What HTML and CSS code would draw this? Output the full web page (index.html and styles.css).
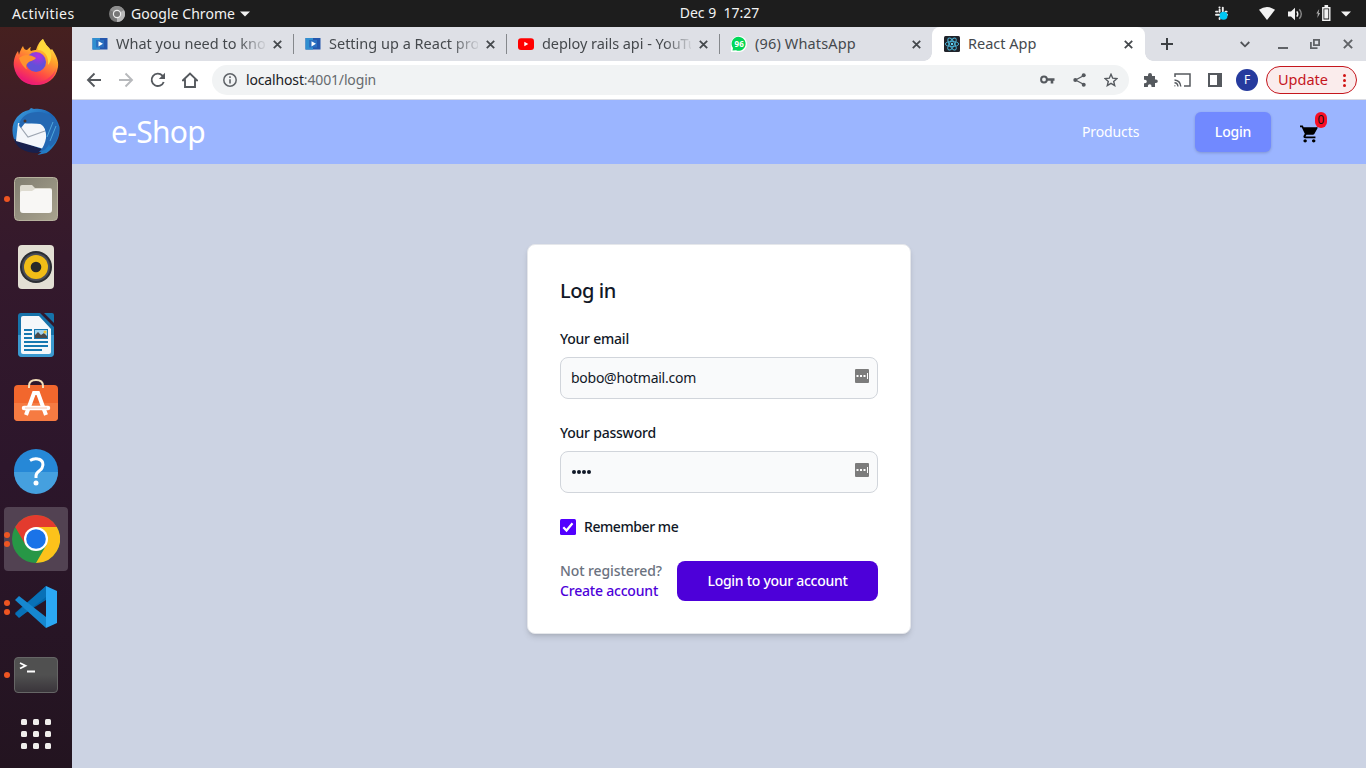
FILE: index.html
```html
<!DOCTYPE html>
<html lang="en">
<head>
<meta charset="utf-8">
<title>React App</title>
<link rel="stylesheet" href="styles.css">
</head>
<body>
<header class="topbar">
  <div class="top-left">
    <span class="activities">Activities</span>
    <svg class="app-ico" width="16" height="16" viewBox="0 0 16 16"><circle cx="8" cy="8" r="8" fill="#777"/><path d="M8 8 1 4A8 8 0 0 1 15 4Z" fill="#8d8d8d"/><path d="M8 8 15 4A8 8 0 0 1 8 16Z" fill="#b8b8b8"/><circle cx="8" cy="8" r="4.2" fill="#eee"/><circle cx="8" cy="8" r="3" fill="#777"/></svg>
    <span class="app-name">Google Chrome</span>
    <svg width="10" height="6" viewBox="0 0 10 6"><path d="M0 .5h10L5 5.5z" fill="#f2f2f2"/></svg>
  </div>
  <div class="clock">Dec 9&nbsp; 17:27</div>
  <div class="tray">
    <svg class="slack" width="15" height="15" viewBox="0 0 15 15"><g stroke="#eee" stroke-width="1.9" stroke-linecap="round"><path d="M5.6 3.800v2M2 5.600h1.500M5.400 1.500h.2M8.800 1.600v3.600M11.500 5.600h1.200M2 8.800h3.500M5.600 12v1M12.500 8.800h.5"/></g><circle cx="9.500" cy="9.700" r="4" fill="#00c8f5"/></svg>
    <svg class="wifi" width="16" height="13" viewBox="0 0 16 13"><path d="M0 2.8Q8-2.6 16 2.8L8 13z" fill="#f2f2f2"/></svg>
    <svg class="sound" width="15" height="14" viewBox="0 0 15 14"><path d="M0 4.5h3L7 .8v12.4L3 9.5H0z" fill="#f2f2f2"/><path d="M8.8 4.3q2 2.7 0 5.4" fill="none" stroke="#f2f2f2" stroke-width="1.4"/><path d="M11.3 2.3q4 4.7 0 9.4" fill="none" stroke="#888" stroke-width="1.4"/></svg>
    <svg class="battery" width="15" height="16" viewBox="0 0 15 16"><path d="M3.2 4 .3 8.5h1.6L1.3 13l2.9-5H2.6z" fill="#aaa"/><path d="M6.8 2.7h7v12.500h-7z" fill="none" stroke="#f2f2f2" stroke-width="1.4"/><path d="M8.5 0h3.6v2H8.5zM8.300 4.300h4v9.300h-4z" fill="#f2f2f2"/></svg>
    <svg width="10" height="6" viewBox="0 0 10 6"><path d="M0 .5h10L5 5.5z" fill="#f2f2f2"/></svg>
  </div>
</header>
<div class="desktop">
<nav class="dock">
  <div class="slot"><svg width="48" height="48" viewBox="0 1 48 48">
    <defs><linearGradient id="ff" x1=".8" y1="0" x2=".3" y2="1"><stop offset="0" stop-color="#fff44f"/><stop offset=".35" stop-color="#ffa52a"/><stop offset=".7" stop-color="#ff4a45"/><stop offset="1" stop-color="#e60d82"/></linearGradient><radialGradient id="fp" cx=".6" cy=".2"><stop offset="0" stop-color="#b52ee0"/><stop offset="1" stop-color="#6350d8"/></radialGradient></defs>
    <path d="M11 8c1 3 2 4 4 4 2-2 3-3 4-3-1 2-1 3 0 4 2-1 4-1 5-1 2-6 4-9 7-11 1 5 5 7 8 11l1-1c4 6 7 12 6 18C44 41 35 47 24 47S4 40 2 29c-1-6 1-12 4-16l1 4c1-4 2-6 4-9z" fill="url(#ff)"/>
    <circle cx="24" cy="24" r="10" fill="url(#fp)"/><path d="M7 20c5-4 11-4 17 0-2 3-7 3-8 5-3 2-2 5 0 7-4-2-7-6-9-12z" fill="#ff922e"/><path d="M26 12c7 0 11 7 10 15 5-6 4-14-1-19l-4-7c-3 4-5 7-5 11z" fill="#ffd83b"/><path d="M4 34c7 11 20 14 31 7 5-3 8-7 9-11-2 14-14 17-20 17C14 47 7 42 4 34z" fill="#ee236f" opacity=".6"/></svg></div>
  <div class="slot"><svg width="48" height="48" viewBox="0 0 48 48">
    <defs><linearGradient id="tb" x1="0" y1="0" x2="1" y2="1"><stop offset="0" stop-color="#3da0e2"/><stop offset=".5" stop-color="#1c65b5"/><stop offset="1" stop-color="#2689cf"/></linearGradient></defs>
    <path d="M.500 24C0 14 7 5 17 3l2-2 3 1c13-2 23 7 25.500 18 1 11-5 20-13 26l-9 2 4-3C14 46 1 40 .500 24z" fill="url(#tb)"/><path d="M2 32q11 4 28 10l-4 4C12 46 4 40 2 32z" fill="#18204d"/><path d="M6 16 32 17l4 20-4 5L4 34z" fill="#f4f6fa"/><path d="m7 18 9 12 17-6" fill="none" stroke="#9da5b1" stroke-width="1.200"/><path d="M7 18c2-9 9-13 19-13 11 0 20 8 21 19-1 8-4 13-9 16l-1-3c-2 4-4 6-9 8 6-9 9-19 3-26-5-5-11-2-18-3l-4 5z" fill="#2468b3"/><path d="m44 19-6 15m3-19-6 15" stroke="#50a8dd" fill="none"/><circle cx="13" cy="14" r="1.500" fill="#4a342a"/></svg></div>
  <div class="slot"><span class="run one"></span><svg width="48" height="48" viewBox="0 0 48 48"><defs><linearGradient id="fl" x2="1" y2="1"><stop stop-color="#807d70"/><stop offset="1" stop-color="#a9a38e"/></linearGradient></defs><rect x="2.500" y="2.500" width="43" height="43" rx="4" fill="url(#fl)" stroke="#b7b29e"/><path d="M8 12q0-2 2-2h10l3 3h15q2 0 2 2v10H8z" fill="#dedbd0"/><path d="M8 18q0-2 2-2h10l3-2h15q2 0 2 2v19q0 3-3 3H11q-3 0-3-3z" fill="#f8f7f5"/></svg></div>
  <div class="slot"><svg width="48" height="48" viewBox="0 0 48 48"><rect x="6" y="2" width="36" height="44" rx="4" fill="#e3dfd4"/><circle cx="24" cy="24" r="16" fill="#2b2d32"/><circle cx="24" cy="24" r="14" fill="#4b4e58"/><circle cx="24" cy="24" r="12" fill="#f1bd17"/><circle cx="24" cy="24" r="5.300" fill="#292929"/></svg></div>
  <div class="slot"><svg width="48" height="48" viewBox="0 0 48 48"><path d="M9 2h19l14 14v26q0 4-4 4H10q-4 0-4-4V5q0-3 3-3z" fill="#1673aa"/><path d="M6 24h36v18q0 4-4 4H10q-4 0-4-4z" fill="#3b99cf"/><path d="M32 2h8q2 0 2 2v8z" fill="#1673aa"/><path d="M9 7q0-2 2-2h16l12 13v23q0 2-2 2H11q-2 0-2-2z" fill="#f5f8fa"/><path d="M12 19h8m-8 4h8m-8 4h8m-8 4h24m-24 4h24m-24 4h18" stroke="#1678b0" stroke-width="2"/><path d="M22 18h14v10H22z" fill="#1678b0"/><path d="M23 19h12v8H23z" fill="#9ed3ef"/><path d="m23 27 0-3 3-3 3 3 3-2 3 3v2z" fill="#494949"/><circle cx="33" cy="21" r="1.500" fill="#f2c230"/></svg></div>
  <div class="slot"><svg width="48" height="48" viewBox="0 0 48 48"><rect x="2" y="6" width="44" height="36" rx="4" fill="#f2672d"/><path d="M2 24h44v14q0 4-4 4H6q-4 0-4-4z" fill="#f67b42"/><path d="M17 9V7q0-6 7-6t7 6v2" fill="none" stroke="#f4dfb9" stroke-width="2"/><g stroke="#fff" fill="none"><path d="m14 36 8-22h4l8 22" stroke-width="4"/><path d="M12 29h24" stroke-width="4.500" stroke-linecap="round"/></g><path d="M13 29h22" stroke="#f4c8b5"/></svg></div>
  <div class="slot"><svg width="48" height="48" viewBox="0 0 48 48"><circle cx="24" cy="24" r="22" fill="#2688d7"/><path d="M2 25h44a22 22 0 0 1-44 0z" fill="#45a0df"/><path d="M18 13.500q4-2.500 8-1.500c5 1 6 5 4 9-1 3-6 3-6 8v2" fill="none" stroke="#fff" stroke-width="3"/><circle cx="24" cy="36" r="2.500" fill="#fff"/></svg></div>
  <div class="slot active"><span class="run two"></span><svg width="48" height="48" viewBox="0 0 48 48"><circle cx="24" cy="24" r="24" fill="#279746"/><path d="M3.200 12A24 24 0 0 1 44.800 12H24L13.600 30z" fill="#e33b2e"/><path d="M24 12h20.800A24 24 0 0 1 24 48l10.400-18z" fill="#fcc21b"/><circle cx="24" cy="24" r="12" fill="#fff"/><circle cx="24" cy="24" r="9.800" fill="#1a73e8"/></svg></div>
  <div class="slot"><span class="run two"></span><svg width="48" height="48" viewBox="0 0 48 48"><path d="M3 30 34 3v14L7 34z" fill="#0065a9"/><path d="m3 31 4 4L34 14V3z" fill="#0871b7"/><path d="m3 17 4-4 27 21v11z" fill="#1688d0"/><path d="m34 3 11 5v32l-11 5z" fill="#2ba8f4"/></svg></div>
  <div class="slot"><span class="run one"></span><svg width="48" height="48" viewBox="0 0 48 48"><defs><linearGradient id="tm" x2="0" y2="1"><stop offset=".5" stop-color="#505050"/><stop offset="1" stop-color="#39343a"/></linearGradient></defs><rect x="2.500" y="6.500" width="43" height="35" rx="3.500" fill="url(#tm)" stroke="#666"/><path d="m8 12 5.500 2.700L8 17.500m7 3h8" fill="none" stroke="#fff" stroke-width="1.800"/></svg></div>
  <div class="apps"><i></i><i></i><i></i><i></i><i></i><i></i><i></i><i></i><i></i></div>
</nav>
<main class="browser">
  <div class="tabs">
    <div class="tab"><svg class="fav" width="16" height="16" viewBox="0 0 16 16"><path d="M.5 2h15v11.500H.5z" fill="#2457ad"/><path d="M.5 2H8v11.500H.5z" fill="#308fd0"/><path d="M4 4h8v7.500H4z" fill="#2a6fc0"/><path d="M6.500 5.200v5.200l4.500-2.600z" fill="#fff"/></svg><span class="tt fade">What you need to kno</span><svg class="x" width="9" height="9" viewBox="0 0 9 9"><path d="m.8.8 7.4 7.4m0-7.4L.8 8.200"/></svg></div>
    <div class="tab"><svg class="fav" width="16" height="16" viewBox="0 0 16 16"><path d="M.5 2h15v11.500H.5z" fill="#2457ad"/><path d="M.5 2H8v11.500H.5z" fill="#308fd0"/><path d="M4 4h8v7.500H4z" fill="#2a6fc0"/><path d="M6.500 5.200v5.200l4.500-2.600z" fill="#fff"/></svg><span class="tt fade">Setting up a React pro</span><svg class="x" width="9" height="9" viewBox="0 0 9 9"><path d="m.8.8 7.4 7.4m0-7.4L.8 8.200"/></svg></div>
    <div class="tab"><svg class="fav" width="16" height="16" viewBox="0 0 16 16"><rect y="2.300" width="16" height="11.600" rx="3" fill="#f00"/><path d="M6.300 5.700v4.600l4-2.300z" fill="#fff"/></svg><span class="tt fade t3">deploy rails api - YouTu</span><svg class="x" width="9" height="9" viewBox="0 0 9 9"><path d="m.8.8 7.4 7.4m0-7.4L.8 8.200"/></svg></div>
    <div class="tab last"><svg class="fav" width="16" height="16" viewBox="0 0 16 16"><path d="M0 16V8a8 8 0 1 1 8 8z" fill="#fff"/><path d="M1.500 14.500 2 12A7 7 0 1 1 5 14.300z" fill="#00d757"/><text x="8.200" y="11" text-anchor="middle" font-family="Noto Sans, sans-serif" font-weight="700" font-size="8" fill="#fff">96</text></svg><span class="tt t4">(96) WhatsApp</span><svg class="x" width="9" height="9" viewBox="0 0 9 9"><path d="m.8.8 7.4 7.4m0-7.4L.8 8.200"/></svg></div>
    <div class="tab current"><svg class="fav" width="16" height="16" viewBox="0 0 16 16"><rect width="16" height="16" rx="1.500" fill="#20232a"/><g fill="none" stroke="#4db5d8" stroke-width=".9"><ellipse cx="8" cy="8" rx="6.700" ry="2.600"/><ellipse cx="8" cy="8" rx="6.700" ry="2.600" transform="rotate(60 8 8)"/><ellipse cx="8" cy="8" rx="6.700" ry="2.600" transform="rotate(120 8 8)"/></g><circle cx="8" cy="8" r="1.200" fill="#61dafb"/></svg><span class="tt t5">React App</span><svg class="x" width="9" height="9" viewBox="0 0 9 9"><path d="m.8.8 7.4 7.4m0-7.4L.8 8.200"/></svg></div>
    <svg class="plus" width="12" height="12" viewBox="0 0 12 12"><path d="M6 0v12M0 6h12" stroke="#3c4043" stroke-width="2"/></svg>
    <div class="wincontrols">
      <svg width="10" height="7" viewBox="0 0 10 7"><path d="m.7 1 4.300 4.300L9.300 1" fill="none" stroke="#505357" stroke-width="1.800"/></svg>
      <svg width="10" height="10" viewBox="0 0 10 10"><path d="M0 9h10" stroke="#606367" stroke-width="2"/></svg>
      <svg width="10" height="10" viewBox="0 0 10 10"><path d="M3.900.9h5.200v5.200H3.900zM.9 3v6.100H7.500" fill="none" stroke="#606367" stroke-width="1.800"/></svg>
      <svg width="10" height="10" viewBox="0 0 10 10"><path d="m.9.9 8.200 8.200m0-8.200L.9 9.100" stroke="#606367" stroke-width="2"/></svg>
    </div>
  </div>
  <div class="toolbar">
    <div class="navicons">
      <svg width="16" height="16" viewBox="0 0 16 16"><path d="M15 8H2m6.500-6.500L2 8l6.500 6.500" fill="none" stroke="#55595e" stroke-width="1.900"/></svg>
      <svg width="16" height="16" viewBox="0 0 16 16"><path d="M1 8h13M7.500 1.500 14 8l-6.500 6.500" fill="none" stroke="#b7b9bc" stroke-width="1.900"/></svg>
      <svg width="16" height="16" viewBox="0 0 16 16"><path d="M13.700 10A6.200 6.200 0 1 1 12.400 3.600L14 5.200" fill="none" stroke="#55595e" stroke-width="1.900"/><path d="M15 .8v6.200H8.800z" fill="#55595e"/></svg>
      <svg width="16" height="16" viewBox="0 0 16 16"><path d="M1 8.300 8 1.500l7 6.800h-2V15H3V8.300z" fill="none" stroke="#55595e" stroke-width="1.900"/></svg>
    </div>
    <div class="omnibox">
      <svg width="14" height="14" viewBox="0 0 14 14"><circle cx="7" cy="7" r="6.200" fill="none" stroke="#5f6368" stroke-width="1.500"/><path d="M7 6.200v4.300M7 3.300v1.700" stroke="#5f6368" stroke-width="1.600"/></svg>
      <span class="url"><b>localhost</b>:4001/login</span>
      <svg class="key" width="15" height="10" viewBox="0 0 15 10"><circle cx="4" cy="4.500" r="2.900" fill="none" stroke="#55595e" stroke-width="2"/><path d="M7 4.500h7.500M12 4.500v4" stroke="#55595e" stroke-width="2.600"/></svg>
      <svg width="13" height="14" viewBox="0 0 13 14"><path d="m11 2.500-8.500 4.500 8.500 4.500" fill="none" stroke="#55595e" stroke-width="1.300"/><g fill="#55595e"><circle cx="10.700" cy="2.300" r="2"/><circle cx="2.300" cy="7" r="2"/><circle cx="10.700" cy="11.700" r="2"/></g></svg>
      <svg width="14" height="14" viewBox="0 0 14 14"><path d="m7 1.300 1.700 3.900 4.200.4-3.200 2.800 1 4.200L7 10.400l-3.700 2.200 1-4.200L1.100 5.600l4.200-.4z" fill="none" stroke="#55595e" stroke-width="1.400"/></svg>
    </div>
    <svg class="puzzle" width="15" height="15" viewBox="0 0 15 15"><path d="M5 3V2a2 2 0 0 1 4 0v1h3v3.500h1a1.800 1.800 0 0 1 0 3.600h-1V14H8.500v-1a1.800 1.800 0 0 0-3.600 0v1H1v-3.700h1a1.800 1.800 0 0 0 0-3.600H1V3z" fill="#55595e"/></svg>
    <svg class="cast" width="17" height="14" viewBox="0 0 17 14"><path d="M1 4V1h15v12h-6" fill="none" stroke="#55595e" stroke-width="1.500"/><path d="M.5 12.800h.8M.5 9.800q3 0 3.500 3.700M.5 7q5.800.5 6.300 6.500" fill="none" stroke="#55595e" stroke-width="1.400"/></svg>
    <svg class="panel" width="14" height="14" viewBox="0 0 14 14"><path d="M1 1h12v12H1z" fill="none" stroke="#55595e" stroke-width="2"/><path d="M9 1h4v12H9z" fill="#55595e"/></svg>
    <span class="avatar">F</span>
    <div class="update"><span>Update</span><svg width="3" height="13" viewBox="0 0 3 13"><g fill="#d01414"><circle cx="1.500" cy="1.500" r="1.500"/><circle cx="1.500" cy="6.500" r="1.500"/><circle cx="1.500" cy="11.500" r="1.500"/></g></svg></div>
  </div>
  <div class="shopbar">
    <a class="brand">e-Shop</a>
    <a class="products">Products</a>
    <a class="login">Login</a>
    <div class="cart"><svg width="18" height="18" viewBox="1 2 21 20"><path d="M7 18c-1.100 0-2 .9-2 2s.9 2 2 2 2-.9 2-2-.9-2-2-2zM1 2v2h2l3.600 7.600L5.200 14c-.7 1.300.3 3 1.800 3h12v-2H7.400l1.100-2h7.500c.7 0 1.400-.4 1.700-1l3.600-6.500A1 1 0 0 0 20 4H5.200l-.9-2zm16 16c-1.100 0-2 .9-2 2s.9 2 2 2 2-.9 2-2-.9-2-2-2z"/></svg><span class="badge">0</span></div>
  </div>
  <section class="page">
    <form class="card">
      <h1>Log in</h1>
      <div><label class="l1">Your email</label><div class="input"><span class="mail">bobo@hotmail.com</span><svg width="14" height="14" viewBox="0 0 14 14"><rect width="14" height="14" rx="1" fill="#7c7c7c"/><path d="M1.500 6h2v2h-2zM5 6h2v2H5zM8.500 6h2v2h-2zM12 4h1v6h-1z" fill="#fff"/></svg></div></div>
      <div><label class="l2">Your password</label><div class="input"><span class="dots"><i></i><i></i><i></i><i></i></span><svg width="14" height="14" viewBox="0 0 14 14"><rect width="14" height="14" rx="1" fill="#7c7c7c"/><path d="M1.500 6h2v2h-2zM5 6h2v2H5zM8.500 6h2v2h-2zM12 4h1v6h-1z" fill="#fff"/></svg></div></div>
      <div class="remember"><svg width="16" height="16" viewBox="0 0 16 16"><rect width="16" height="16" rx="1.500" fill="#5200ff"/><path d="m3.300 8.300 3.200 3.200 6-7.300" fill="none" stroke="#fff" stroke-width="2.200"/></svg><span>Remember me</span></div>
      <div class="actions"><div class="reg"><div class="not">Not registered?</div><a class="create">Create account</a></div><div class="submit"><span>Login to your account</span></div></div>
    </form>
  </section>
</main>
</div>
</body>
</html>
```
FILE: styles.css
```css
* { box-sizing: border-box; }
body { margin: 0; width: 1366px; height: 768px; overflow: hidden; font-family: "Noto Sans", "Open Sans", sans-serif; display: flex; flex-direction: column; }
svg { display: block; flex: none; }
span, a, label { white-space: nowrap; }
.topbar { height: 27px; background: #1d1d1d; color: #f2f2f2; font-size: 14px; line-height: 27px; display: grid; grid-template-columns: 679px 81px 1fr; }
.top-left { display: flex; align-items: center; padding-left: 12px; }
.activities { width: 97px; letter-spacing: .42px; }
.app-name { margin-left: 6px; width: 109px; letter-spacing: .05px; }
.clock { text-align: center; white-space: nowrap; line-height: 26px; letter-spacing: 0; }
.tray { display: flex; align-items: center; justify-content: flex-end; padding-right: 15px; }
.wifi { margin-left: 30px; }
.sound { margin-left: 13px; }
.battery { margin: 0 10px 1px 13px; }
.desktop { flex: 1; display: flex; min-height: 0; }
.dock { width: 72px; background: linear-gradient(#46201f 0, #3d1d27 90px, #34192c 230px, #2c162b 440px, #231420 741px); padding: 4px; display: flex; flex-direction: column; gap: 4px; }
.slot { height: 64px; flex: none; border-radius: 4px; display: flex; align-items: center; justify-content: center; position: relative; }
.slot.active { background: #524252; }
.run { position: absolute; left: 0; width: 6px; height: 6px; border-radius: 50%; background: #ee5522; }
.run.two { margin-top: -9px; box-shadow: 0 9px #ee5522; }
.apps { width: 30px; margin: 8px auto 0; display: grid; grid-template-columns: repeat(3, 6px); gap: 6px; }
.apps i { height: 6px; border-radius: 1.5px; background: #f0eeec; }
.browser { flex: 1; min-width: 0; display: flex; flex-direction: column; }
.tabs { height: 34px; background: #dee0e6; padding-left: 9px; display: flex; align-items: center; }
.tab { width: 213px; height: 34px; padding: 0 12px 0 11px; display: flex; align-items: center; gap: 8px; background: linear-gradient(#85888c, #85888c) right center / 1px 20px no-repeat; }
.tab.last { width: 212px; padding-right: 11px; background: none; }
.tab.current { padding: 0 12px; background: #fff; border-radius: 8px 8px 0 0; position: relative; }
.tab.current::before, .tab.current::after { content: ""; position: absolute; bottom: 0; width: 8px; height: 8px; }
.tab.current::before { left: -8px; background: radial-gradient(circle at 0 0, #dee0e6 7.5px, #fff 8px); }
.tab.current::after { right: -8px; background: radial-gradient(circle at 100% 0, #dee0e6 7.5px, #fff 8px); }
.tt { width: 149px; font-size: 14.5px; line-height: 22px; margin-top: -2px; color: #45494d; letter-spacing: 0; }
.t3 { letter-spacing: -.05px; }
.t4 { letter-spacing: .15px; }
.fade { -webkit-mask-image: linear-gradient(90deg, #000 122px, transparent 152px); mask-image: linear-gradient(90deg, #000 122px, transparent 152px); }
.x { margin-left: auto; stroke: #45494d; stroke-width: 1.8; }
.plus { margin-left: 16px; }
.wincontrols { margin-left: auto; margin-right: 13px; display: flex; align-items: center; gap: 23px; }
.wincontrols svg:nth-child(1) { margin-right: 5px; }
.wincontrols svg:nth-child(2) { margin-right: -1px; }
.toolbar { height: 39px; background: #fff; border-bottom: 1px solid #dadce4; display: flex; align-items: center; padding-left: 14px; }
.navicons { display: flex; gap: 16px; width: 126px; }
.omnibox { width: 917px; height: 30px; border-radius: 15px; background: #f1f3f4; display: flex; align-items: center; padding: 0 11px; gap: 18px; }
.url { flex: 1; margin: -2px 0 0 -9px; font-size: 14px; color: #666a6e; letter-spacing: -.15px; }
.url b { font-weight: 400; color: #202124; }
.puzzle { margin-left: 14px; }
.cast { margin-left: 16px; }
.panel { margin-left: 17px; }
.avatar { width: 22px; height: 22px; margin-left: 14px; border-radius: 50%; background: #263b9e; color: #fff; font-size: 12px; line-height: 22px; text-align: center; }
.update { width: 91px; height: 28px; margin-left: 8px; border: 1px solid #c5161d; border-radius: 14px; background: #faecec; color: #c5161d; font-size: 14.5px; line-height: 24px; display: flex; align-items: center; padding: 0 11px; }
.update span { margin-top: -2px; }
.update svg { margin-left: auto; margin-right: -1px; }
.shopbar { height: 64px; background: #9bb5ff; display: flex; align-items: center; color: #fff; font-size: 14px; }
.brand { font-size: 30px; line-height: 36px; margin-left: 39px; margin-right: auto; letter-spacing: -.7px; }
.products { width: 57px; margin-top: -2px; letter-spacing: -.12px; }
.login { width: 76px; height: 40px; margin-left: 56px; border-radius: 6px; background: #7189ff; text-align: center; line-height: 40px; font-weight: 500; letter-spacing: -.2px; box-shadow: 0 1px 3px rgba(0,0,0,.18); }
.cart { position: relative; width: 19px; margin: 3px 47px 0 29px; }
.badge { position: absolute; left: 15px; top: -13px; width: 12px; height: 16px; border-radius: 6px; background: #f80f25; color: #111; font-size: 12px; line-height: 16px; text-align: center; }
.page { flex: 1; background: #ccd3e3; display: flex; justify-content: center; align-items: flex-start; padding-top: 80px; }
.card { width: 384px; height: 390px; border: 1px solid #e5e7eb; border-radius: 8px; background: #fff; padding: 32px; box-shadow: 0 4px 6px -1px rgba(0,0,0,.12), 0 2px 4px -2px rgba(0,0,0,.12); display: flex; flex-direction: column; gap: 24px; color: #111827; font-size: 14px; line-height: 20px; font-weight: 500; }
h1 { margin: 0; font-size: 20px; line-height: 28px; font-weight: 500; letter-spacing: -.45px; }
label { display: block; margin-bottom: 8px; letter-spacing: -.23px; }
.input { height: 42px; border: 1px solid #d1d5db; border-radius: 8px; background: #f9fafb; display: flex; align-items: center; justify-content: space-between; padding: 0 8px 0 10px; font-weight: 400; }
.mail { letter-spacing: -.26px; }
.input svg { margin-bottom: 4px; }
.dots { display: flex; gap: 1px; padding-left: .5px; }
.dots i { width: 4px; height: 4px; border-radius: 50%; background: #111827; }
.remember { height: 20px; display: flex; align-items: center; gap: 8px; letter-spacing: -.43px; }
.actions { display: flex; justify-content: space-between; height: 40px; }
.not { color: #6b7280; letter-spacing: -.1px; }
.create { color: #4d00d9; display: block; letter-spacing: -.2px; }
.submit { width: 201px; height: 40px; border-radius: 8px; background: #4d00d9; color: #fff; line-height: 40px; text-align: center; letter-spacing: -.28px; }
```
